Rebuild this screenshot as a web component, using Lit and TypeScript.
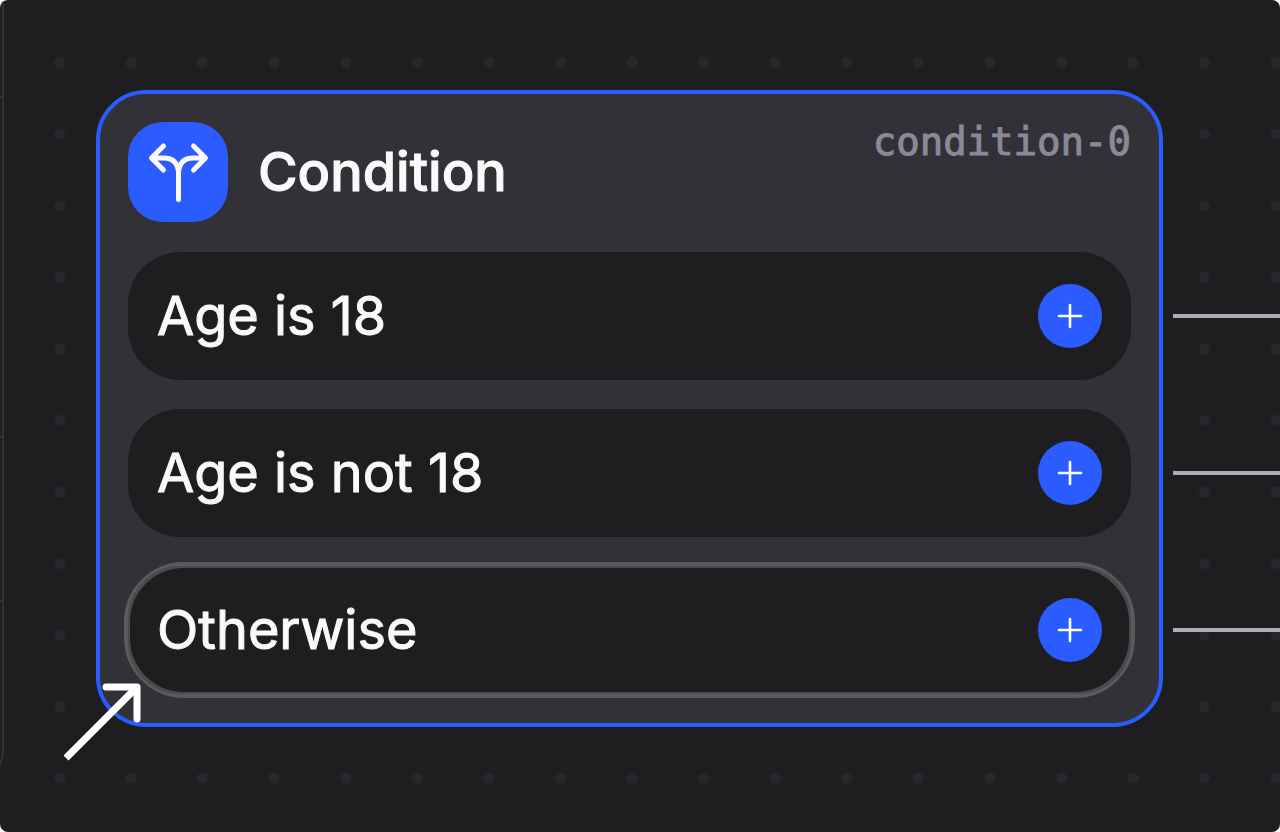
import { LitElement, html, css } from "lit";
import { customElement, property } from "lit/decorators.js";

@customElement("branch-row")
class BranchRow extends LitElement {
  @property() label = "";
  @property({ type: Boolean, reflect: true }) selected = false;

  static styles = css`
    :host {
      position: relative;
      display: flex;
      align-items: center;
      justify-content: space-between;
      box-sizing: border-box;
      padding: 32px 29px;
      border-radius: 52px;
      background: #1e1e20;
      color: #fafafa;
    }
    :host([selected])::after {
      content: "";
      position: absolute;
      inset: -4px;
      border: 6px solid rgba(255, 255, 255, 0.2);
      border-radius: 60px;
      pointer-events: none;
    }
    .label {
      font-size: 54px;
      line-height: 64px;
      font-weight: 400;
      -webkit-text-stroke: 1px currentColor;
    }
    .add {
      display: grid;
      place-items: center;
      width: 64px;
      height: 64px;
      padding: 0;
      border: 0;
      border-radius: 50%;
      background: #2a5cff;
      cursor: pointer;
    }
    .plus {
      width: 26px;
      height: 26px;
      fill: none;
      stroke: #fff;
      stroke-width: 2.6;
      stroke-linecap: round;
    }
    .edge {
      position: absolute;
      left: calc(100% + 42px);
      top: calc(50% - 2px);
      width: 100vw;
      height: 4px;
      background: #adadb3;
    }
  `;

  render() {
    return html`
      <span class="label">${this.label}</span>
      <button class="add" aria-label="Add step after ${this.label}">
        <svg class="plus" viewBox="0 0 26 26"><path d="M13 2V24M2 13H24" /></svg>
      </button>
      <span class="edge"></span>
    `;
  }
}

@customElement("app-root")
class AppRoot extends LitElement {
  branches = [
    { label: "Age is 18", selected: false },
    { label: "Age is not 18", selected: false },
    { label: "Otherwise", selected: true },
  ];

  static styles = css`
    :host {
      display: block;
      background: #fff;
      font-family: Inter, "Liberation Sans", sans-serif;
    }
    .canvas {
      position: relative;
      box-sizing: border-box;
      min-height: 100vh;
      padding: 90px 117px 90px 96px;
      overflow: hidden;
      border-radius: 8px;
      background: #1e1e20;
    }
    .backdrop {
      position: absolute;
      inset: 0;
      width: 100%;
      height: 100%;
    }
    .node {
      position: relative;
      padding: 28px 28px 29px;
      border: 4px solid #2a5cff;
      border-radius: 50px;
      background: #323137;
    }
    .header {
      display: flex;
      align-items: flex-start;
      margin-bottom: 30px;
    }
    .tile {
      display: block;
      width: 100px;
      height: 100px;
      border-radius: 35px;
      background: #2a5cff;
    }
    .title {
      margin: 0 auto 0 30px;
      font-size: 54px;
      line-height: 100px;
      font-weight: 500;
      color: #fafafa;
      -webkit-text-stroke: 1px currentColor;
    }
    .id {
      font-family: "DejaVu Sans Mono", monospace;
      font-size: 39px;
      line-height: 40px;
      color: #8b8997;
      -webkit-text-stroke: 1px currentColor;
    }
    .rows {
      display: grid;
      gap: 29px;
    }
    .pointer {
      position: absolute;
      left: -36px;
      bottom: -38px;
      width: 80px;
      height: 80px;
      fill: none;
      stroke: #fff;
      stroke-width: 7;
    }
  `;

  render() {
    return html`
      <main class="canvas">
        <svg class="backdrop" aria-hidden="true">
          <defs>
            <pattern id="dots" x="23.7" y="26.8" width="71.57" height="71.57" patternUnits="userSpaceOnUse">
              <circle cx="35.8" cy="35.8" r="5.5" fill="#28272c" />
            </pattern>
          </defs>
          <rect x="24" y="27" width="100%" height="100%" fill="url(#dots)" />
          <path d="M3 0V750Q3 760 -3 770M0 97H3M0 437H3M0 601H3" fill="none" stroke="#323137" stroke-width="2" />
        </svg>
        <section class="node">
          <header class="header">
            <svg class="tile" viewBox="0 0 100 100" fill="none" stroke="#fafafa" stroke-width="5" stroke-linecap="round" stroke-linejoin="round">
              <path d="M50.500 77.500V50Q49 36 36 36H24M35.500 24L23.500 36L35.500 48M50.500 50Q52 36 65 36H77M65.500 24L77.500 36L65.500 48" />
            </svg>
            <h1 class="title">Condition</h1>
            <span class="id">condition-0</span>
          </header>
          <div class="rows">
            ${this.branches.map(
              (b) => html`<branch-row .label=${b.label} ?selected=${b.selected}></branch-row>`
            )}
          </div>
          <svg class="pointer" viewBox="0 0 80 80" aria-hidden="true">
            <path d="M2 77L73 6" />
            <path d="M42 6H73V38" stroke-linecap="round" stroke-linejoin="round" />
          </svg>
        </section>
      </main>
    `;
  }
}
